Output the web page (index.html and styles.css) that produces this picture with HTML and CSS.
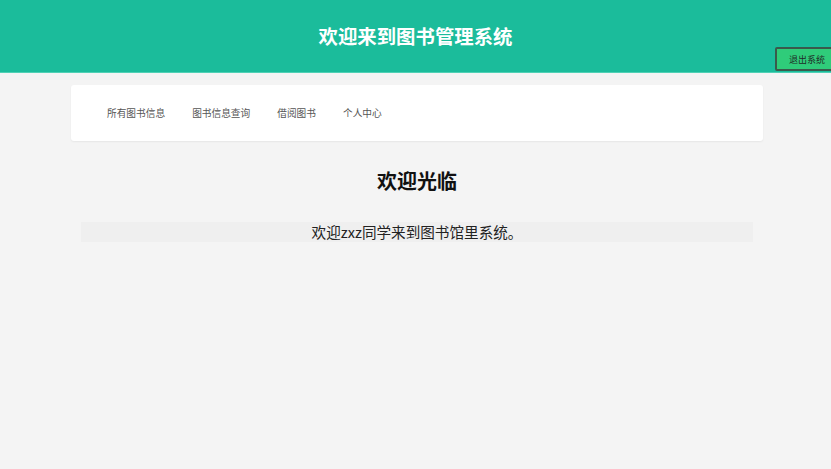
FILE: index.html
```html
<!DOCTYPE html>
<html lang="zh-CN">
<head>
    <meta charset="UTF-8">
    <meta name="viewport" content="width=831, height=469">
    <title>图书管理系统</title>
    <link rel="stylesheet" href="styles.css">
</head>
<body>
    <div class="header">
        <h1 class="title">欢迎来到图书管理系统</h1>
        <button class="logout-btn">退出系统</button>
    </div>

    <div class="nav-card">
        <ul class="nav">
            <li class="nav-item">所有图书信息</li>
            <li class="nav-item">图书信息查询</li>
            <li class="nav-item">借阅图书</li>
            <li class="nav-item">个人中心</li>
        </ul>
    </div>

    <div class="main">
        <h2 class="welcome-title">欢迎光临</h2>
        <p class="welcome-text">欢迎zxz同学来到图书馆里系统。</p>
    </div>
</body>
</html>
```

FILE: styles.css
```css
* {
    margin: 0;
    padding: 0;
    box-sizing: border-box;
}

body {
    width: 831px;
    height: 469px;
    font-family: "Noto Sans CJK SC", "Noto Sans", sans-serif;
    background: #f4f4f4;
    overflow: hidden;
}

.header {
    position: relative;
    height: 73px;
    background: #1bbc9b;
    border-bottom: 1px solid #4fd1b5;
    display: flex;
    justify-content: center;
    align-items: center;
}

.title {
    font-size: 19.4px;
    font-weight: 700;
    color: #fff;
    line-height: 1;
    margin-top: -1px;
}

.logout-btn {
    position: absolute;
    top: 47px;
    left: 775px;
    width: 60px;
    height: 24px;
    background: #2fcc7a;
    border: 2px solid #3a5a4c;
    border-radius: 2px;
    font-family: inherit;
    font-size: 9px;
    color: #1f2d27;
    text-align: left;
    padding-left: 12px;
}

.nav-card {
    width: 692px;
    height: 56px;
    margin: 12px 0 0 71px;
    background: #fff;
    border-radius: 3px;
    box-shadow: 0 1px 2px rgba(0,0,0,0.06);
    display: flex;
    align-items: center;
    padding-left: 36px;
}

.nav {
    list-style: none;
    display: flex;
    gap: 27px;
}

.nav-item {
    font-size: 9.7px;
    color: #555;
    line-height: 1;
    margin-top: 1px;
}

.main {
    width: 692px;
    margin-left: 71px;
    padding: 0 10px;
}

.welcome-title {
    font-size: 20px;
    font-weight: 700;
    color: #111;
    text-align: center;
    line-height: 1;
    margin-top: 30px;
}

.welcome-text {
    margin-top: 31px;
    height: 20px;
    background: #efefef;
    font-size: 14.6px;
    line-height: 20px;
    color: #222;
    text-align: center;
}
```
